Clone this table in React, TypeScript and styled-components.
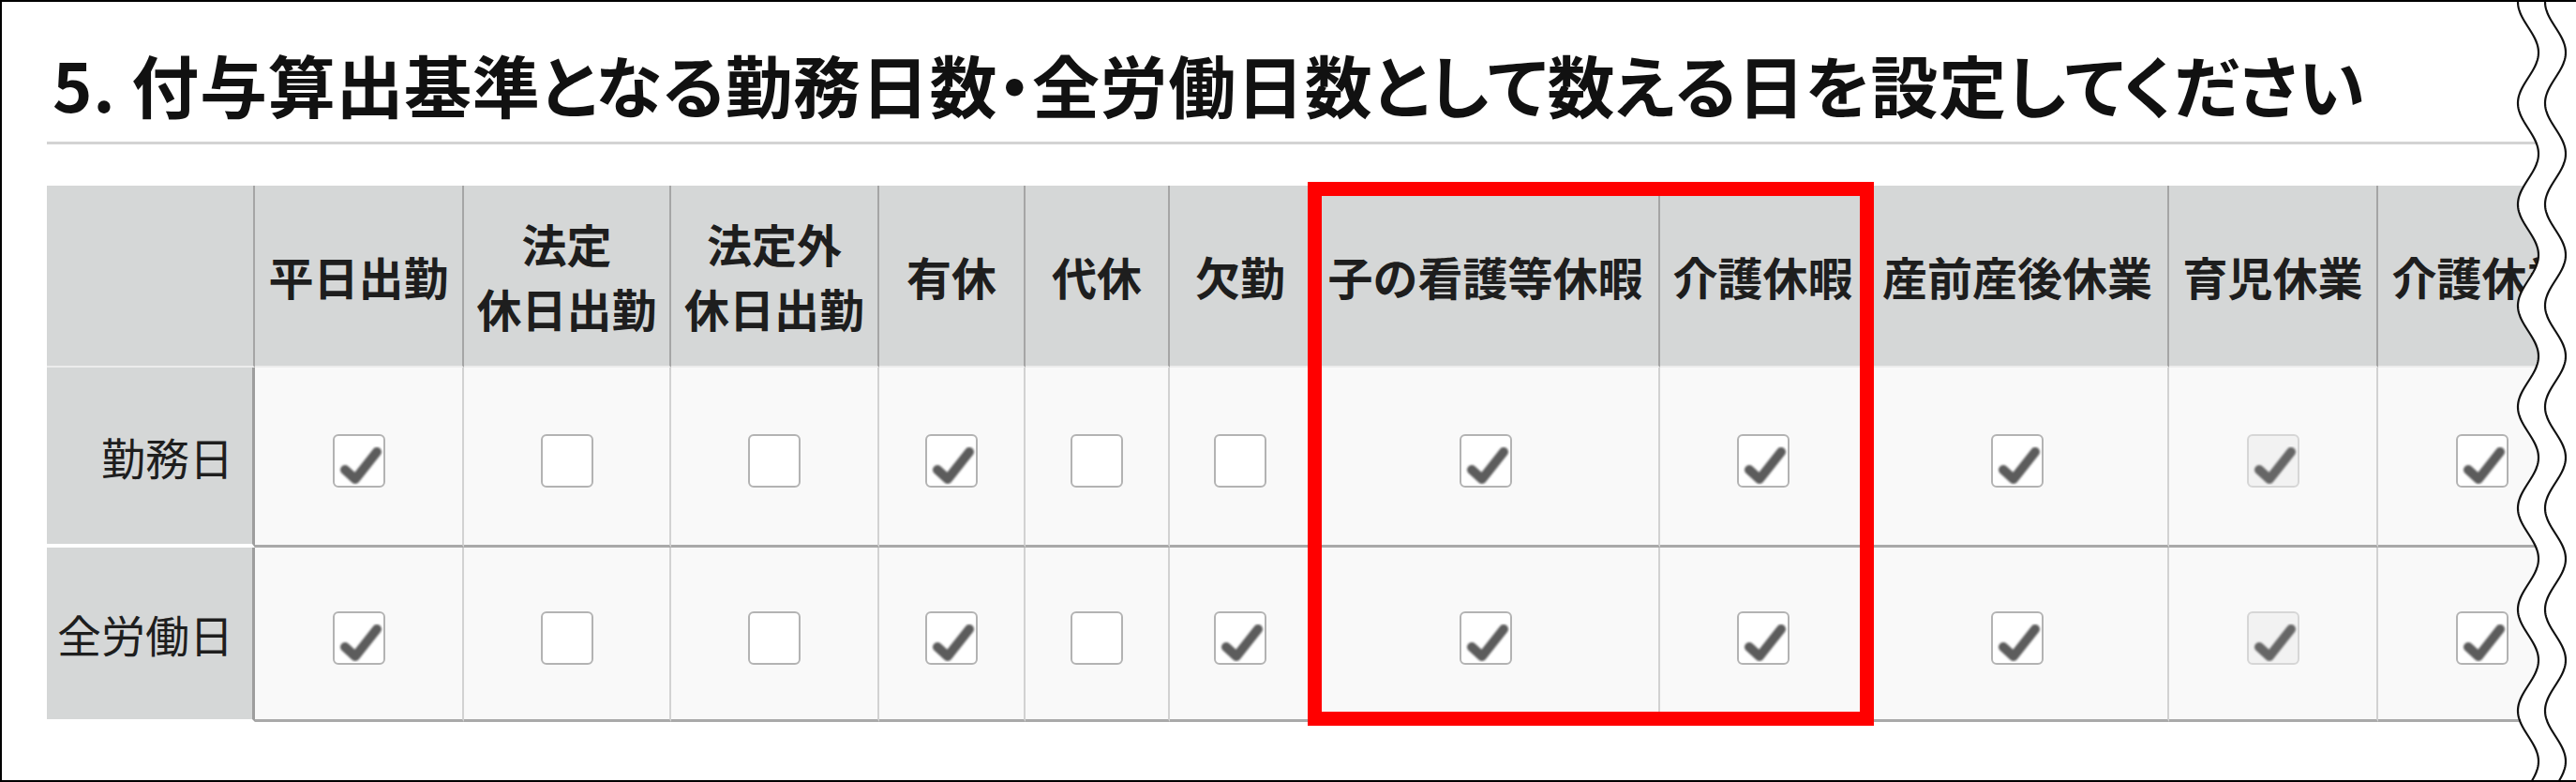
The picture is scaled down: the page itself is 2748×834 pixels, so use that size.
import React from "react";
import styled, { createGlobalStyle } from "styled-components";

const GlobalStyle = createGlobalStyle`
  html, body { margin: 0; padding: 0; background: #fff; }
  body { font-family: "Noto Sans CJK JP", "Noto Sans", sans-serif; }
`;

const Frame = styled.div`
  position: relative;
  width: 2748px;
  height: 834px;
  box-sizing: border-box;
  border-top: 2px solid #000;
  border-bottom: 2px solid #000;
  border-left: 2px solid #000;
  overflow: hidden;
  padding-left: 48px;
  background: #fff;
`;

const Title = styled.h2`
  margin: 0;
  padding: 51px 0 26px 6px;
  font-family: "Noto Sans CJK JP", sans-serif;
  font-weight: 700;
  font-size: 72px;
  line-height: 72px;
  letter-spacing: 0.7px;
  color: #111;
  font-feature-settings: "palt";
  white-space: nowrap;
  border-bottom: 3px solid #d3d3d3;
`;

const TableWrap = styled.div`
  position: relative;
  margin-top: 44px;
  width: max-content;
`;

const Grid = styled.table`
  border-collapse: separate;
  border-spacing: 0;
  table-layout: fixed;
  width: 2710px;
  font-family: "Noto Sans CJK JP", sans-serif;
  color: #1e1e1e;
`;

const Col = styled.col<{ $w: number }>`
  width: ${(p) => p.$w}px;
`;

const Row = styled.tr<{ $h: number }>`
  height: ${(p) => p.$h}px;
`;

const HeadCell = styled.th`
  background: #d5d7d7;
  border-right: 2px solid #a5a5a5;
  border-bottom: 2px solid #ececec;
  padding: 0;
  font-size: 48px;
  font-weight: 700;
  line-height: 1.43;
  text-align: center;
  vertical-align: middle;
  white-space: nowrap;
`;

const RowLabel = styled.th<{ $last?: boolean }>`
  background: #d5d7d7;
  border-right: 3px solid #9e9e9e;
  border-bottom: ${(p) => (p.$last ? "3px solid #fff" : "4px solid #fff")};
  padding: 0 20px 0 0;
  font-size: 47px;
  font-weight: 400;
  text-align: right;
  vertical-align: middle;
  white-space: nowrap;
`;

const DataCell = styled.td`
  background: #f9f9f9;
  border-right: 2px solid #d2d2d2;
  border-bottom: 3px solid #a9a9a9;
  padding: 0;
  text-align: center;
  vertical-align: middle;
`;

const Box = styled.span<{ $disabled?: boolean }>`
  display: inline-block;
  box-sizing: border-box;
  width: 56px;
  height: 57px;
  margin-top: 10px;
  border: 2px solid ${(p) => (p.$disabled ? "#d6d6d6" : "#b3b3b3")};
  border-radius: 6px;
  background: ${(p) => (p.$disabled ? "#f2f2f2" : "#fff")};
  vertical-align: middle;
  svg {
    display: block;
    width: 52px;
    height: 53px;
  }
`;

const Highlight = styled.div`
  position: absolute;
  left: 1345px;
  top: -4px;
  width: 604px;
  height: 580px;
  box-sizing: border-box;
  border: 15px solid #ff0000;
  pointer-events: none;
`;

const Wave = styled.svg`
  position: absolute;
  top: -2px;
  right: 0;
  width: 68px;
  height: 834px;
`;

const Check: React.FC<{ checked: boolean; disabled?: boolean }> = ({ checked, disabled }) => (
  <Box $disabled={disabled}>
    {checked && (
      <svg viewBox="0 0 52 53">
        <defs>
          <filter id="soft" x="-20%" y="-20%" width="140%" height="140%">
            <feGaussianBlur stdDeviation="1.1" />
          </filter>
        </defs>
        <polyline
          points="11,36 22,46 45,17"
          fill="none"
          stroke={disabled ? "#666" : "#5c5c5c"}
          strokeWidth={10}
          strokeLinecap="round"
          strokeLinejoin="round"
          filter="url(#soft)"
        />
      </svg>
    )}
  </Box>
);

const columns: { label: React.ReactNode; w: number }[] = [
  { label: "平日出勤", w: 223 },
  { label: <>法定<br />休日出勤</>, w: 221 },
  { label: <>法定外<br />休日出勤</>, w: 222 },
  { label: "有休", w: 156 },
  { label: "代休", w: 154 },
  { label: "欠勤", w: 152 },
  { label: "子の看護等休暇", w: 371 },
  { label: "介護休暇", w: 221 },
  { label: "産前産後休業", w: 322 },
  { label: "育児休業", w: 223 },
  { label: "介護休業", w: 223 },
];

const disabledCol = 9;

const rows: { label: string; values: boolean[]; h: number }[] = [
  { label: "勤務日", values: [true, false, false, true, false, false, true, true, true, true, true], h: 192 },
  { label: "全労働日", values: [true, false, false, true, false, true, true, true, true, true, true], h: 186 },
];

const wavePoints = (cx: number) => {
  const pts: string[] = [];
  for (let y = -6; y <= 842; y += 2) {
    const x = cx - 11 * Math.cos((2 * Math.PI * y) / 108);
    pts.push(`${x.toFixed(2)},${y}`);
  }
  return pts;
};

export default function App() {
  const left = wavePoints(17);
  const right = wavePoints(46);
  return (
    <>
      <GlobalStyle />
      <Frame>
        <Title>5. 付与算出基準となる勤務日数・全労働日数として数える日を設定してください</Title>
        <TableWrap>
          <Grid>
            <colgroup>
              <Col $w={222} />
              {columns.map((c, i) => (
                <Col key={i} $w={c.w} />
              ))}
            </colgroup>
            <thead>
              <Row $h={194}>
                <HeadCell />
                {columns.map((c, i) => (
                  <HeadCell key={i}>{c.label}</HeadCell>
                ))}
              </Row>
            </thead>
            <tbody>
              {rows.map((r, ri) => (
                <Row key={r.label} $h={r.h}>
                  <RowLabel $last={ri === rows.length - 1}>{r.label}</RowLabel>
                  {r.values.map((v, ci) => (
                    <DataCell key={ci}>
                      <Check checked={v} disabled={ci === disabledCol} />
                    </DataCell>
                  ))}
                </Row>
              ))}
            </tbody>
          </Grid>
          <Highlight />
        </TableWrap>
        <Wave viewBox="0 -2 68 834">
          <path d={`M${left.join(" L")} L70,842 L70,-6 Z`} fill="#fff" />
          <polyline points={left.join(" ")} fill="none" stroke="#111" strokeWidth={2.2} />
          <polyline points={right.join(" ")} fill="none" stroke="#111" strokeWidth={2.2} />
        </Wave>
      </Frame>
    </>
  );
}
